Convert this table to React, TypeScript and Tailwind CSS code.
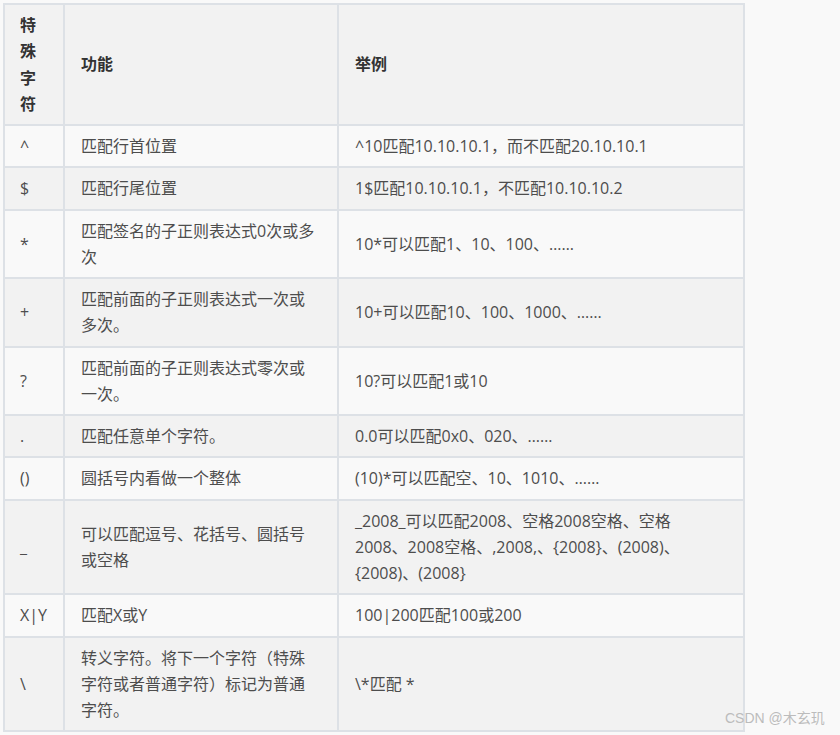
import React from 'react';

type Row = { sym: string; func: string[]; ex: string[] };

const rows: Row[] = [
  { sym: '^', func: ['匹配行首位置'], ex: ['^10匹配10.10.10.1，而不匹配20.10.10.1'] },
  { sym: '$', func: ['匹配行尾位置'], ex: ['1$匹配10.10.10.1，不匹配10.10.10.2'] },
  { sym: '*', func: ['匹配签名的子正则表达式0次或多', '次'], ex: ['10*可以匹配1、10、100、……'] },
  { sym: '+', func: ['匹配前面的子正则表达式一次或', '多次。'], ex: ['10+可以匹配10、100、1000、……'] },
  { sym: '?', func: ['匹配前面的子正则表达式零次或', '一次。'], ex: ['10?可以匹配1或10'] },
  { sym: '.', func: ['匹配任意单个字符。'], ex: ['0.0可以匹配0x0、020、……'] },
  { sym: '()', func: ['圆括号内看做一个整体'], ex: ['(10)*可以匹配空、10、1010、……'] },
  {
    sym: '_',
    func: ['可以匹配逗号、花括号、圆括号', '或空格'],
    ex: ['_2008_可以匹配2008、空格2008空格、空格', '2008、2008空格、,2008,、{2008}、(2008)、', '{2008)、(2008}'],
  },
  { sym: 'X|Y', func: ['匹配X或Y'], ex: ['100|200匹配100或200'] },
  {
    sym: '\\',
    func: ['转义字符。将下一个字符（特殊', '字符或者普通字符）标记为普通', '字符。'],
    ex: ['\\*匹配 *'],
  },
];

const Lines = ({ lines }: { lines: string[] }) => (
  <>
    {lines.map((l, i) => (
      <span key={i} className="block whitespace-nowrap">
        {l}
      </span>
    ))}
  </>
);

const cell = 'border-r-2 border-b-2 border-[#dde1e6] py-[7px] align-middle';

export default function App() {
  return (
    <div className="relative w-[840px] h-[735px] overflow-hidden bg-[#f9f9f9] pt-[3px] pl-[3px] font-['Open_Sans','Noto_Sans_CJK_SC',sans-serif] text-[16px] leading-[26.25px] text-[#4d4d4d]">
      <table className="table-fixed w-[742px] border-separate border-spacing-0 border-t-2 border-l-2 border-[#dde1e6]">
        <thead>
          <tr className="bg-[#f2f2f2] text-left font-bold text-[#333]">
            <th className={`${cell} w-[60px] px-[15px] font-bold`}>特殊字符</th>
            <th className={`${cell} w-[274px] px-4 font-bold`}>功能</th>
            <th className={`${cell} w-[406px] px-4 font-bold`}>举例</th>
          </tr>
        </thead>
        <tbody>
          {rows.map((r, i) => (
            <tr key={i} className={i % 2 === 0 ? 'bg-[#f9f9f9]' : 'bg-[#f2f2f2]'}>
              <td className={`${cell} px-[15px] whitespace-nowrap`}>{r.sym}</td>
              <td className={`${cell} px-4`}>
                <Lines lines={r.func} />
              </td>
              <td className={`${cell} px-4`}>
                <Lines lines={r.ex} />
              </td>
            </tr>
          ))}
        </tbody>
      </table>

      {/* watermark */}
      <div className="absolute left-[725px] top-[708px] text-[14px] leading-[20px] text-[#bcbcbc] font-['Liberation_Sans','Noto_Sans_CJK_SC',sans-serif]">
        CSDN @木玄玑
      </div>
    </div>
  );
}
